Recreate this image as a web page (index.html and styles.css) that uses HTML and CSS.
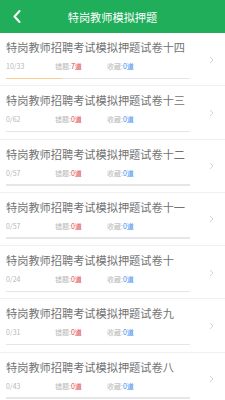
FILE: index.html
```html
<!DOCTYPE html>
<html lang="zh">
<head>
<meta charset="utf-8">
<link rel="stylesheet" href="styles.css">
</head>
<body>
<header class="topbar">
  <svg class="back" width="8" height="13" viewBox="0 0 8 13"><polyline points="6.5,1 1.5,6.5 6.5,12" fill="none" stroke="#fff" stroke-width="2" stroke-linecap="round" stroke-linejoin="round"/></svg>
  <h1 class="title">特岗教师模拟押题</h1>
</header>
<ul class="list">
  <li class="row"><div class="content"><div class="name">特岗教师招聘考试模拟押题试卷十四</div><div class="stats"><span class="count">10/33</span><span class="stat">错题:<em class="wrong">7道</em></span><span class="stat">收藏:<em class="fav">0道</em></span></div><div class="bar"><div class="fill" style="width:30.3%"></div></div></div><svg class="arrow" width="5" height="8" viewBox="0 0 5 8"><polyline points="1,1 4,4 1,7" fill="none" stroke="#d4d4d4" stroke-width="1"/></svg></li>
  <li class="row"><div class="content"><div class="name">特岗教师招聘考试模拟押题试卷十三</div><div class="stats"><span class="count">0/62</span><span class="stat">错题:<em class="wrong">0道</em></span><span class="stat">收藏:<em class="fav">0道</em></span></div><div class="bar"><div class="fill" style="width:0%"></div></div></div><svg class="arrow" width="5" height="8" viewBox="0 0 5 8"><polyline points="1,1 4,4 1,7" fill="none" stroke="#d4d4d4" stroke-width="1"/></svg></li>
  <li class="row"><div class="content"><div class="name">特岗教师招聘考试模拟押题试卷十二</div><div class="stats"><span class="count">0/57</span><span class="stat">错题:<em class="wrong">0道</em></span><span class="stat">收藏:<em class="fav">0道</em></span></div><div class="bar"><div class="fill" style="width:0%"></div></div></div><svg class="arrow" width="5" height="8" viewBox="0 0 5 8"><polyline points="1,1 4,4 1,7" fill="none" stroke="#d4d4d4" stroke-width="1"/></svg></li>
  <li class="row"><div class="content"><div class="name">特岗教师招聘考试模拟押题试卷十一</div><div class="stats"><span class="count">0/57</span><span class="stat">错题:<em class="wrong">0道</em></span><span class="stat">收藏:<em class="fav">0道</em></span></div><div class="bar"><div class="fill" style="width:0%"></div></div></div><svg class="arrow" width="5" height="8" viewBox="0 0 5 8"><polyline points="1,1 4,4 1,7" fill="none" stroke="#d4d4d4" stroke-width="1"/></svg></li>
  <li class="row"><div class="content"><div class="name">特岗教师招聘考试模拟押题试卷十</div><div class="stats"><span class="count">0/24</span><span class="stat">错题:<em class="wrong">0道</em></span><span class="stat">收藏:<em class="fav">0道</em></span></div><div class="bar"><div class="fill" style="width:0%"></div></div></div><svg class="arrow" width="5" height="8" viewBox="0 0 5 8"><polyline points="1,1 4,4 1,7" fill="none" stroke="#d4d4d4" stroke-width="1"/></svg></li>
  <li class="row"><div class="content"><div class="name">特岗教师招聘考试模拟押题试卷九</div><div class="stats"><span class="count">0/31</span><span class="stat">错题:<em class="wrong">0道</em></span><span class="stat">收藏:<em class="fav">0道</em></span></div><div class="bar"><div class="fill" style="width:0%"></div></div></div><svg class="arrow" width="5" height="8" viewBox="0 0 5 8"><polyline points="1,1 4,4 1,7" fill="none" stroke="#d4d4d4" stroke-width="1"/></svg></li>
  <li class="row"><div class="content"><div class="name">特岗教师招聘考试模拟押题试卷八</div><div class="stats"><span class="count">0/43</span><span class="stat">错题:<em class="wrong">0道</em></span><span class="stat">收藏:<em class="fav">0道</em></span></div><div class="bar"><div class="fill" style="width:0%"></div></div></div><svg class="arrow" width="5" height="8" viewBox="0 0 5 8"><polyline points="1,1 4,4 1,7" fill="none" stroke="#d4d4d4" stroke-width="1"/></svg></li>
</ul>
</body>
</html>
```

FILE: styles.css
```css
* { box-sizing: border-box; }
html, body { margin: 0; padding: 0; }
body {
  width: 225px;
  height: 400px;
  overflow: hidden;
  background: #fff;
  font-family: "Noto Sans CJK SC", "Noto Sans", sans-serif;
}
.topbar {
  position: relative;
  height: 33px;
  background: #20ae5b;
  display: flex;
  align-items: center;
  justify-content: center;
}
.back {
  position: absolute;
  left: 13px;
  top: 10px;
}
.title {
  margin: 0;
  font-size: 11.2px;
  font-weight: normal;
  color: #fff;
  line-height: 14px;
}
.list {
  list-style: none;
  margin: 0;
  padding: 0;
}
.row {
  display: flex;
  align-items: center;
  padding: 7px 11px 6.3px 6px;
  border-bottom: 1px solid #efefef;
}
.content {
  width: 184px;
}
.name {
  font-size: 11.2px;
  line-height: 14px;
  color: #727272;
  white-space: nowrap;
}
.stats {
  margin-top: 8px;
  display: flex;
  font-size: 7px;
  line-height: 9px;
  color: #b8b8b8;
}
.count { width: 49px; }
.stat { width: 52px; }
.stats em { font-style: normal; }
.wrong { color: #e0474c; }
.fav { color: #3f8ef0; }
.bar {
  margin-top: 6.5px;
  height: 1.5px;
  background: #e6e6e6;
}
.fill {
  height: 100%;
  background: #f9cf91;
}
.arrow {
  margin-left: auto;
}
```
